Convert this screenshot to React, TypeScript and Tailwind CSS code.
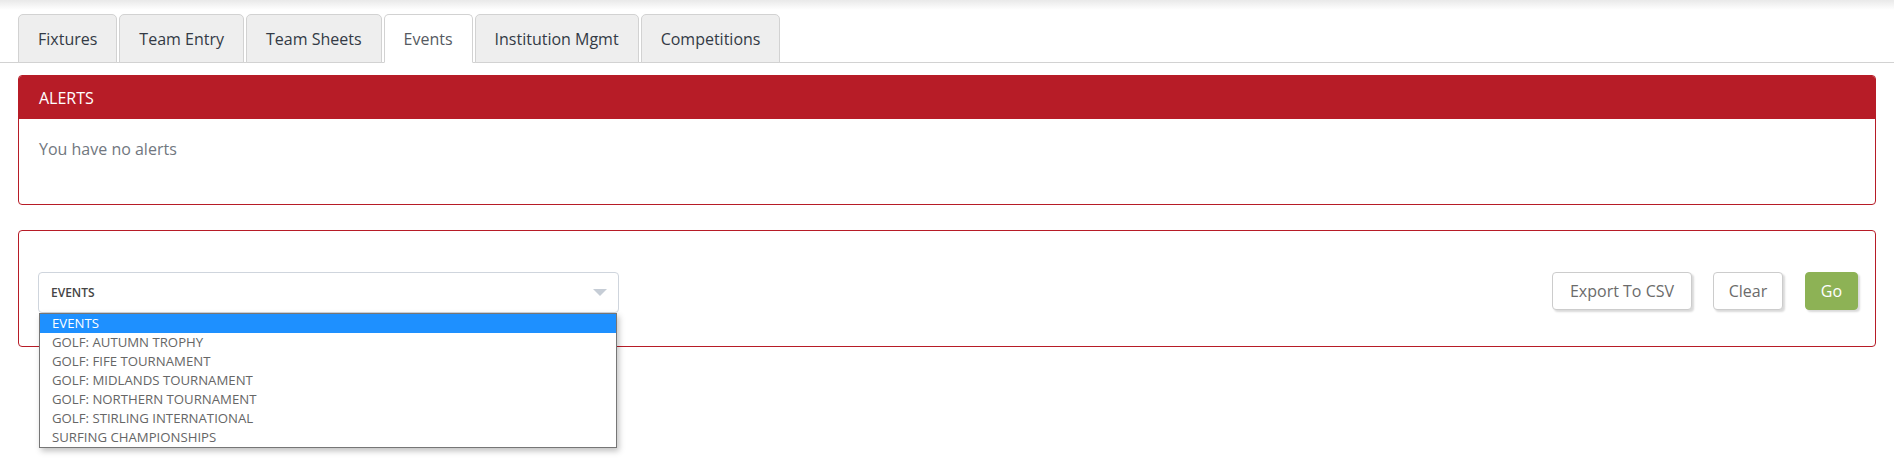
import React, { useState } from 'react';

const tabs = ['Fixtures', 'Team Entry', 'Team Sheets', 'Events', 'Institution Mgmt', 'Competitions'];

const events = [
  'EVENTS',
  'GOLF: AUTUMN TROPHY',
  'GOLF: FIFE TOURNAMENT',
  'GOLF: MIDLANDS TOURNAMENT',
  'GOLF: NORTHERN TOURNAMENT',
  'GOLF: STIRLING INTERNATIONAL',
  'SURFING CHAMPIONSHIPS',
];

const App: React.FC = () => {
  const [activeTab, setActiveTab] = useState('Events');
  const [selected, setSelected] = useState('EVENTS');

  return (
    <div className="min-h-[460px] w-full bg-white font-['Open_Sans','Lato',sans-serif] text-[16px]">
      {/* navbar shadow remnant */}
      <div className="h-[10px] bg-gradient-to-b from-[#e9e9e9] to-white" />

      {/* tabs */}
      <div className="flex items-end gap-[2px] border-b border-[#d2d2d2] pl-[18px] pt-[4px]">
        {tabs.map(tab => {
          const active = tab === activeTab;
          return (
            <button
              key={tab}
              onClick={() => setActiveTab(tab)}
              className={
                active
                  ? '-mb-px h-[49px] rounded-t-[5px] border border-b-white border-[#d2d2d2] bg-white px-[19px] font-normal text-[#555a62]'
                  : '-mb-px h-[49px] rounded-t-[5px] border border-[#d2d2d2] bg-[#eeeeee] px-[19px] font-normal text-[#333a45]'
              }
            >
              {tab}
            </button>
          );
        })}
      </div>

      {/* alerts */}
      <div className="mx-[18px] mt-[12px] overflow-hidden rounded-[4px] border border-[#b71c27]">
        <div className="flex h-[43px] items-center bg-[#b71c27] px-[20px] text-white">ALERTS</div>
        <div className="px-[20px] pb-[43px] pt-[18px] leading-[24px] text-[#717780]">You have no alerts</div>
      </div>

      {/* filter panel */}
      <div className="mx-[18px] mt-[25px] flex items-start justify-between rounded-[4px] border border-[#b71c27] pb-[33px] pl-[19px] pr-[17px] pt-[41px]">
        <div className="relative w-[581px]">
          <div className="flex h-[41px] items-center justify-between rounded-[4px] border border-[#cfd5dd] bg-white pl-[12px] pr-[11px]">
            <span className="text-[12px] font-semibold text-[#454545]">{selected}</span>
            <svg width="14" height="7" viewBox="0 0 14 7">
              <path d="M0 0 L14 0 L7 7 Z" fill="#c6cdd6" />
            </svg>
          </div>
          <ul className="absolute left-[1px] top-[41px] z-10 w-[578px] border border-[#767676] bg-white shadow-[2px_3px_6px_rgba(0,0,0,0.25)]">
            {events.map(ev => (
              <li
                key={ev}
                onClick={() => setSelected(ev)}
                className={
                  ev === selected
                    ? 'h-[19px] bg-[#1e90ff] pl-[12px] text-[13.2px] leading-[19px] text-white'
                    : 'h-[19px] pl-[12px] text-[13.2px] leading-[19px] text-[#666666]'
                }
              >
                {ev}
              </li>
            ))}
          </ul>
        </div>

        <div className="flex items-center">
          <button className="h-[38px] w-[140px] rounded-[4px] border border-[#cccccc] bg-white text-[#6b6b6b] shadow-[2px_2px_2px_rgba(0,0,0,0.15)]">
            Export To CSV
          </button>
          <button className="ml-[21px] h-[38px] w-[70px] rounded-[4px] border border-[#cccccc] bg-white text-[#6b6b6b] shadow-[2px_2px_2px_rgba(0,0,0,0.15)]">
            Clear
          </button>
          <button className="ml-[22px] h-[38px] w-[53px] rounded-[4px] border border-[#8db255] bg-[#8db255] text-white shadow-[2px_2px_2px_rgba(0,0,0,0.15)]">
            Go
          </button>
        </div>
      </div>
    </div>
  );
};

export default App;
